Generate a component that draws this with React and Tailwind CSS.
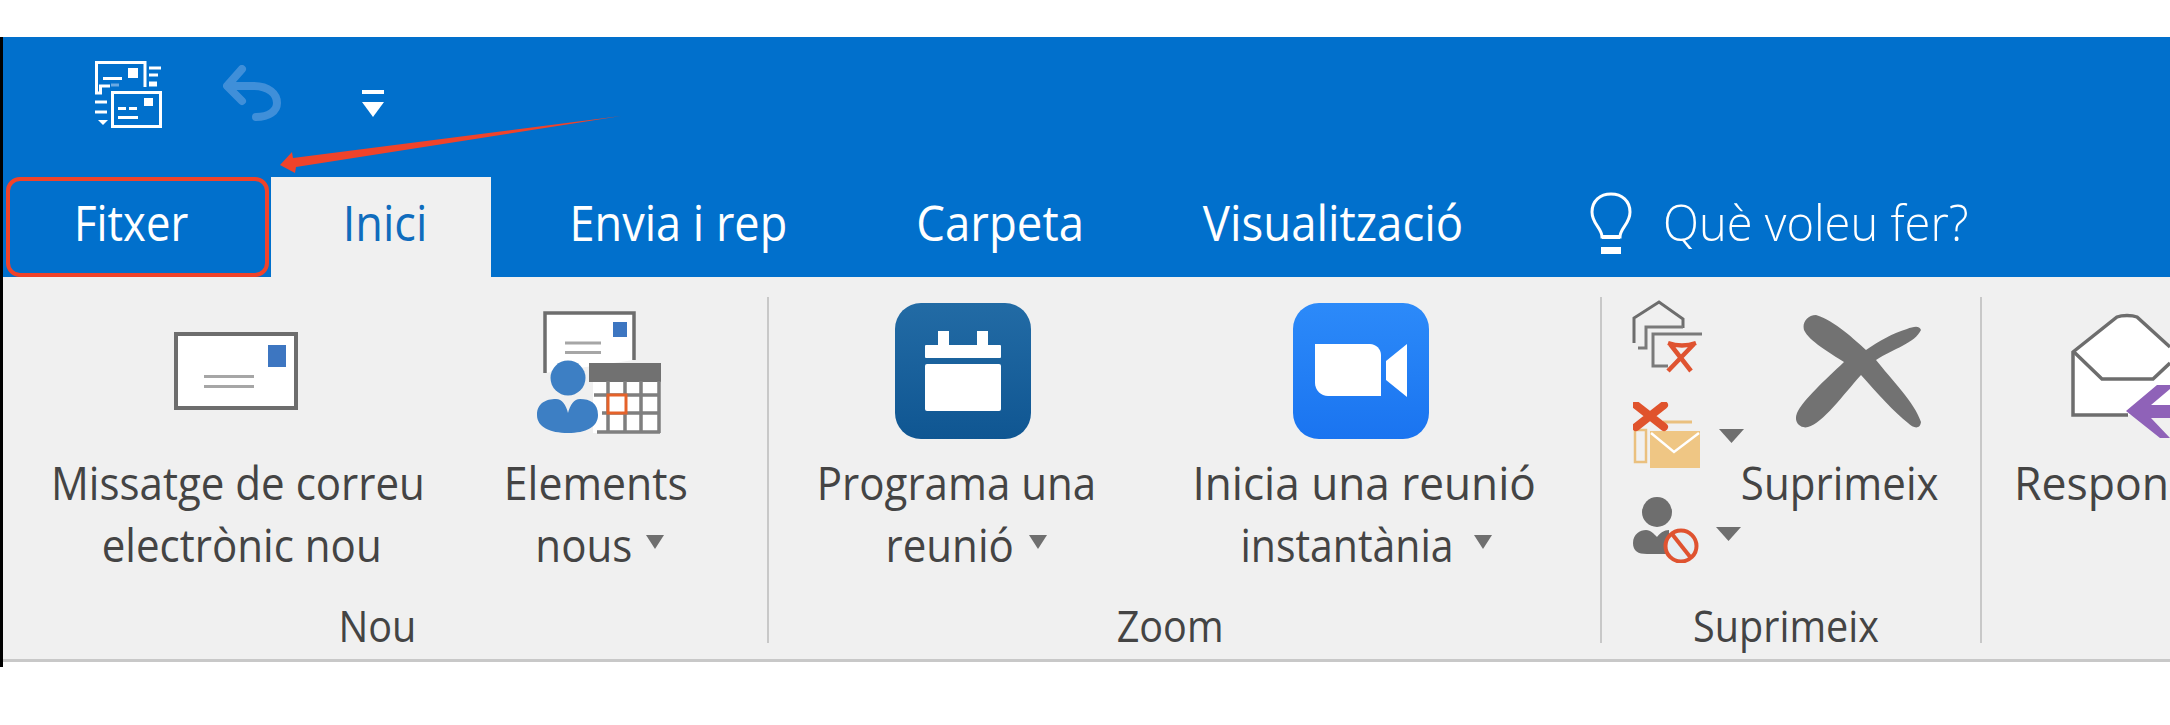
import React from "react";

const F = "[font-family:'Open_Sans','Noto_Sans',sans-serif]";

function Caret({ className = "" }) {
  return (
    <svg width="18" height="14" viewBox="0 0 18 14" preserveAspectRatio="none" className={className}>
      <polygon points="0,0 18,0 9,14" fill="#6f6f6f" />
    </svg>
  );
}

function Squeezed({ children, scale = "scale-x-[0.935]", origin = "origin-center" }) {
  return <span className={`inline-block whitespace-nowrap ${origin} ${scale}`}>{children}</span>;
}

function QatIcon() {
  return (
    <svg width="90" height="80" viewBox="0 0 90 80" fill="none" stroke="#fff" strokeWidth="3">
      <path d="M60 32V7.5H11.5V38H15.5V31H25" />
      <rect x="43" y="13" width="10" height="10" fill="#fff" stroke="none" />
      <path d="M18 23.5H37" />
      <path d="M26 30H34" stroke="#6aa9e2" />
      <rect x="27.5" y="37.5" width="48" height="34" />
      <rect x="59" y="43" width="9" height="8" fill="#fff" stroke="none" />
      <path d="M33 53.5H41M44 53.5H52M33 62.5H53" />
      <path d="M64 13H76M64 20H73" />
      <path d="M64 29H72" strokeWidth="5" />
      <path d="M10 47H22M10 57H22" />
      <polygon points="13,65 23,65 18,70" fill="#fff" stroke="none" />
    </svg>
  );
}

function Undo() {
  return (
    <svg width="58" height="56" viewBox="0 0 58 56" fill="none" stroke="#3f8fd9" strokeWidth="8" strokeLinecap="round" strokeLinejoin="round">
      <path d="M19 4L4 21L19 36" />
      <path d="M5 21H30C46 21 54 29 54 38C54 46 46 52 33 52" />
    </svg>
  );
}

function QatDropdown() {
  return (
    <svg width="22" height="27" viewBox="0 0 22 27">
      <rect x="0" y="0" width="22" height="4" fill="#fff" />
      <polygon points="0,12 22,12 11,27" fill="#fff" />
    </svg>
  );
}

function Bulb() {
  return (
    <svg width="42" height="63" viewBox="0 0 42 63" fill="none" stroke="#fff" strokeWidth="3">
      <path d="M12 45C12 36 2 32 2 20C2 9 10 2 21 2C32 2 40 9 40 20C40 32 30 36 30 45Z" />
      <path d="M12 45H30" strokeWidth="4" />
      <rect x="11" y="55" width="20" height="7" fill="#fff" stroke="none" />
    </svg>
  );
}

function NewMail() {
  return (
    <svg width="124" height="78" viewBox="0 0 124 78">
      <rect x="2" y="2" width="120" height="74" fill="#fff" stroke="#6d6d6d" strokeWidth="4" />
      <rect x="94" y="13" width="18" height="22" fill="#3d76c1" />
      <rect x="30" y="43" width="50" height="3" fill="#a6a6a6" />
      <rect x="30" y="53" width="50" height="3" fill="#a6a6a6" />
    </svg>
  );
}

function NewItems() {
  return (
    <svg width="140" height="135" viewBox="0 0 140 135" className="mt-[3px]">
      <path d="M15 68V8H104V55" fill="#fff" stroke="#6d6d6d" strokeWidth="3.5" />
      <rect x="83" y="17" width="14" height="15" fill="#3d76c1" />
      <rect x="35" y="36.5" width="36" height="3" fill="#a6a6a6" />
      <rect x="35" y="46" width="36" height="3" fill="#a6a6a6" />
      <rect x="63" y="70" width="66" height="58" fill="#fff" />
      <rect x="59" y="58" width="72" height="19" fill="#717171" />
      <path d="M78 76V128M95 76V128M111 76V128M129 76V128M64 90H130M72 108H130M67 127H130" stroke="#7f7f7f" strokeWidth="3.5" fill="none" />
      <rect x="78" y="90" width="18" height="18" fill="#fff" stroke="#e5622a" strokeWidth="3" />
      <circle cx="38" cy="73" r="17.5" fill="#3d7fc4" />
      <path d="M7 110C7 98 16 94 26 94C32 94 36 100 38 108C40 100 44 94 50 94C60 94 68 98 68 110C68 122 56 128 38 128C20 128 7 122 7 110Z" fill="#3d7fc4" />
    </svg>
  );
}

function Schedule() {
  return (
    <div className="flex h-[136px] w-[136px] items-center justify-center rounded-[26px] bg-gradient-to-b from-[#226ba5] to-[#0f5692]">
      <svg width="76" height="80" viewBox="0 0 76 80">
        <rect x="13" y="0" width="11" height="18" fill="#fff" />
        <rect x="52" y="0" width="11" height="18" fill="#fff" />
        <rect x="0" y="14" width="76" height="13" rx="1" fill="#fff" />
        <rect x="0" y="33" width="76" height="47" rx="2" fill="#fff" />
      </svg>
    </div>
  );
}

function Video() {
  return (
    <div className="flex h-[136px] w-[136px] items-center justify-center rounded-[26px] bg-gradient-to-b from-[#2c8af9] to-[#1a74f0]">
      <svg width="92" height="54" viewBox="0 0 92 54">
        <path d="M0 0H55C61 0 66 5 66 11V52H13C6 52 0 46 0 39Z" fill="#fff" />
        <path d="M71 17L92 0V53L71 36Z" fill="#fff" />
      </svg>
    </div>
  );
}

function Cleanup() {
  return (
    <svg width="90" height="80" viewBox="0 0 90 80" fill="none">
      <path d="M9 48V23L34 7L58 24V33" stroke="#6d6d6d" strokeWidth="3" />
      <path d="M13 53H21V32H58" stroke="#7a7a7a" strokeWidth="3" />
      <path d="M77 39H28V71H43" stroke="#7a7a7a" strokeWidth="3" />
      <path d="M43 48Q57 53 71 48M45 49L66 76M69 49L43 76" stroke="#df5330" strokeWidth="4.5" />
    </svg>
  );
}

function JunkMail() {
  return (
    <svg width="68" height="66" viewBox="0 0 68 66" fill="none">
      <path d="M2 60H13V28H2Z" stroke="#eac07e" strokeWidth="2.5" />
      <path d="M30 20H59" stroke="#eac07e" strokeWidth="3" />
      <rect x="17" y="29" width="50" height="37" fill="#efc684" />
      <path d="M18 31L41 50L66 31" stroke="#fff" strokeWidth="2.5" />
      <path d="M3 3L31 25M31 3L3 25" stroke="#e0532c" strokeWidth="8" strokeLinecap="round" />
    </svg>
  );
}

function BlockUser() {
  return (
    <svg width="66" height="66" viewBox="0 0 66 66">
      <circle cx="24" cy="15" r="15" fill="#6e6e6e" />
      <path d="M0 46C0 37 7 33 13 33C18 33 21 37 24 40C27 36 31 33 36 33V57H14C5 57 0 54 0 46Z" fill="#6e6e6e" />
      <circle cx="48" cy="49" r="15.5" fill="#e6eef2" stroke="#df5330" strokeWidth="4" />
      <path d="M39 37L58 61" stroke="#df5330" strokeWidth="4" />
    </svg>
  );
}

function BigX() {
  return (
    <svg width="127" height="114" viewBox="0 0 127 114">
      <path d="M21 0C12 0 7 8 9 15C14 26 35 38 49 47C30 65 8 85 2 98C-2 108 6 114 13 112C28 108 48 80 66 60C82 78 100 98 113 108C118 113 125 115 126 107C120 88 96 64 81 45C98 34 120 28 126 15C124 10 118 12 112 14C98 18 84 26 71 35C60 25 40 6 21 0Z" fill="#727272" />
    </svg>
  );
}

function Reply() {
  return (
    <svg width="110" height="145" viewBox="0 0 110 145" className="shrink-0">
      <path d="M13 47L57 11H77L110 42V110H13Z" fill="#fff" />
      <path d="M110 42L77 12C72 10 62 10 57 12L13 47V110H68" fill="none" stroke="#6d6d6d" strokeWidth="3.5" />
      <path d="M14 47L42 74H93L110 58" fill="none" stroke="#6d6d6d" strokeWidth="3.5" />
      <polygon points="66,106 97,80 110,80 110,84 91,100 110,100 110,113 91,113 110,133 100,133" fill="#8f62b8" />
    </svg>
  );
}

function TextLine({ children, className = "" }) {
  return (
    <div className={`flex h-[62px] items-center justify-center text-[45px] leading-[62px] text-[#444] ${F} ${className}`}>
      {children}
    </div>
  );
}

function BigButton({ width, icon, iconClass = "", line1, line2, caret, caretClass = "ml-[8px]", line1Scale, line2Scale, line2Class = "" }) {
  return (
    <div className={`flex flex-col items-center ${width}`}>
      <div className={`flex h-[136px] items-center justify-center ${iconClass}`}>{icon}</div>
      <TextLine className="mt-[13px]"><Squeezed scale={line1Scale}>{line1}</Squeezed></TextLine>
      <TextLine className={line2Class}>
        <Squeezed scale={line2Scale}>{line2}</Squeezed>
        {caret && <Caret className={`mt-[-6px] ${caretClass}`} />}
      </TextLine>
    </div>
  );
}

function Separator() {
  return <div className="my-[20px] h-[346px] w-[2px] shrink-0 bg-[#c8c8c8]" />;
}

function Group({ width, labelPad, label, children }) {
  return (
    <div className={`flex h-full shrink-0 flex-col pt-[26px] ${width}`}>
      <div className="flex">{children}</div>
      <div className={`mt-auto flex justify-center pb-[7px] text-[43px] leading-[52px] text-[#444] ${F} ${labelPad}`}>
        <Squeezed scale="scale-x-[0.92]">{label}</Squeezed>
      </div>
    </div>
  );
}

export default function App() {
  return (
    <div className="flex h-[725px] w-[2170px] overflow-hidden bg-white">
      <div className="mt-[37px] h-[630px] w-[3px] shrink-0 bg-black" />
      <div className="relative min-w-0 flex-1 pt-[37px]">
        {/* quick access */}
        <div className="flex h-[140px] items-start bg-[#0170cc] pl-[82px]">
          <div className="mt-[18px]"><QatIcon /></div>
          <div className="ml-[48px] mt-[28px]"><Undo /></div>
          <div className="ml-[81px] mt-[53px]"><QatDropdown /></div>
        </div>

        {/* tabs */}
        <div className={`flex h-[100px] items-stretch bg-[#0170cc] text-[49px] text-white ${F}`}>
          <div className="ml-[3px] flex w-[263px] items-center justify-center rounded-[14px] border-[4px] border-[#f0432a] pb-[8px] pr-[13px]">
            <Squeezed scale="scale-x-[0.89]">Fitxer</Squeezed>
          </div>
          <div className="ml-[2px] flex w-[220px] items-center justify-center bg-[#f0f0f0] pb-[8px] pl-[8px] text-[#0f6cbd]">
            <Squeezed scale="scale-x-[0.92]">Inici</Squeezed>
          </div>
          <div className="flex w-[374px] items-center justify-center pb-[8px]"><Squeezed scale="scale-x-[0.92]">Envia i rep</Squeezed></div>
          <div className="flex w-[270px] items-center justify-center pb-[8px]"><Squeezed scale="scale-x-[0.93]">Carpeta</Squeezed></div>
          <div className="flex w-[396px] items-center justify-center pb-[8px]"><Squeezed scale="scale-x-[0.93]">Visualització</Squeezed></div>
          <div className="ml-[59px] flex items-center gap-[31px] pb-[8px]">
            <Bulb />
            <span className="font-light"><Squeezed scale="scale-x-[0.96]" origin="origin-left">Què voleu fer?</Squeezed></span>
          </div>
        </div>

        {/* ribbon */}
        <div className="flex h-[385px] items-start overflow-hidden border-b-[3px] border-[#c8c8c8] bg-[#f0f0f0]">
          <Group width="w-[764px]" labelPad="pr-[16px]" label="Nou">
            <BigButton width="w-[470px]" icon={<NewMail />} iconClass="mr-[4px]" line1="Missatge de correu" line2="electrònic nou" line2Class="pl-[8px]" />
            <BigButton width="w-[246px]" icon={<NewItems />} iconClass="ml-[8px]" line1="Elements" line1Scale="scale-x-[0.95]" line2="nous" caret caretClass="ml-[10px]" line2Class="pl-[4px]" />
          </Group>
          <Separator />
          <Group width="w-[831px]" labelPad="pr-[29px]" label="Zoom">
            <BigButton width="w-[374px]" icon={<Schedule />} iconClass="ml-[14px]" line1="Programa una" line2="reunió" caret caretClass="ml-[10px]" line2Class="pl-[16px]" />
            <BigButton width="w-[442px]" icon={<Video />} iconClass="mr-[6px]" line1="Inicia una reunió" line1Scale="scale-x-[0.98]" line2="instantània" line2Scale="scale-x-[0.91]" caret caretClass="ml-[10px]" line2Class="pr-[6px]" />
          </Group>
          <Separator />
          <Group width="w-[378px]" labelPad="pr-[10px]" label="Suprimeix">
            <div className="ml-[23px] flex w-[124px] flex-col">
              <div className="mt-[-8px]"><Cleanup /></div>
              <div className="ml-[8px] mt-[27px] flex items-start"><JunkMail /><Caret className="ml-[18px] mt-[27px] h-[14px] w-[25px]" /></div>
              <div className="ml-[8px] mt-[29px] flex items-start"><BlockUser /><Caret className="ml-[17px] mt-[30px] h-[14px] w-[25px]" /></div>
            </div>
            <div className="ml-[-7px] flex w-[196px] flex-col items-start">
              <div className="ml-[53px] mt-[12px]"><BigX /></div>
              <TextLine className="mt-[23px] w-full"><Squeezed>Suprimeix</Squeezed></TextLine>
            </div>
          </Group>
          <Separator />
          <div className="flex h-full flex-1 flex-col overflow-hidden pl-[32px] pt-[28px]">
            <div className="pl-[46px]"><Reply /></div>
            <div className={`mt-[2px] h-[62px] whitespace-nowrap text-[45px] leading-[62px] text-[#444] ${F}`}>
              <Squeezed scale="scale-x-[0.99]" origin="origin-left">Respon</Squeezed>
            </div>
          </div>
        </div>

        {/* annotation arrow */}
        <svg className="absolute left-[267px] top-[108px]" width="360" height="72" viewBox="0 0 360 72">
          <polygon points="351,8 23,50 22,44 10,57 25,65 26,59" fill="#f0432a" />
        </svg>
      </div>
    </div>
  );
}
